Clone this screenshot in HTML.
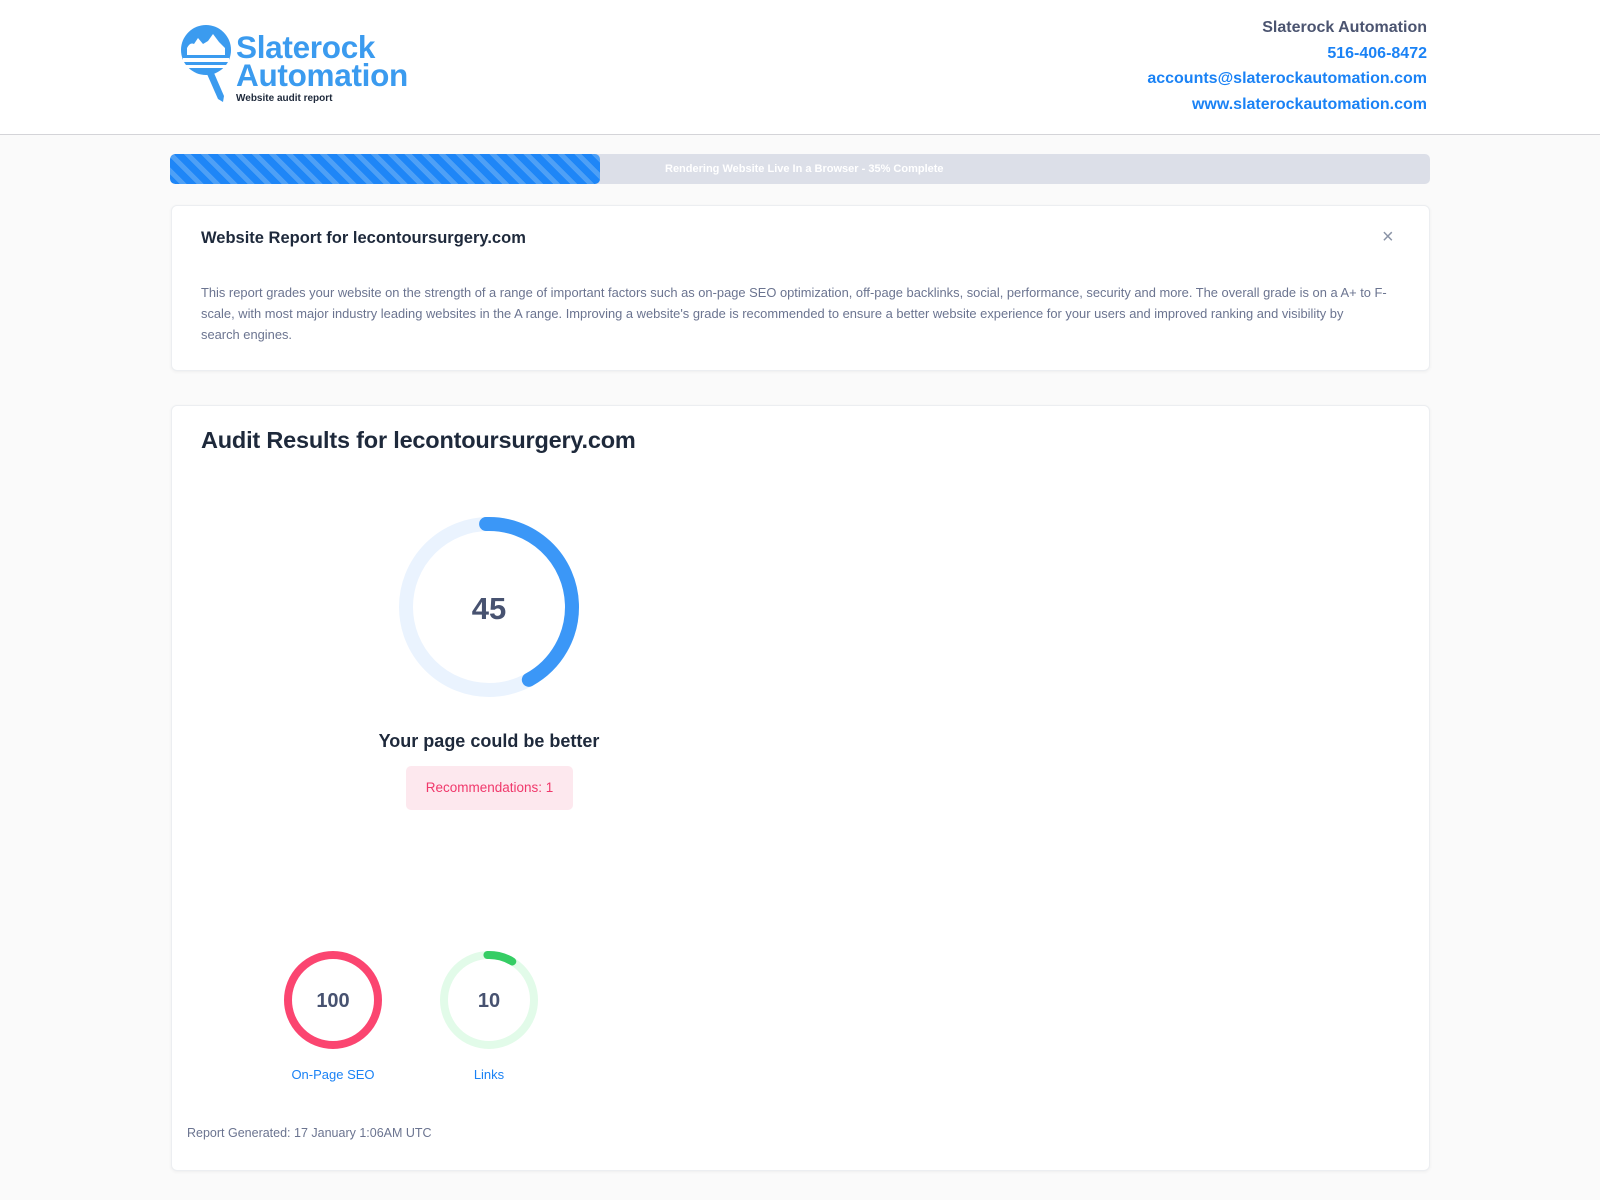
<!DOCTYPE html>
<html><head><meta charset="utf-8"><style>
*{margin:0;padding:0;box-sizing:border-box}
body{width:1600px;height:1200px;background:#fafafa;font-family:"Liberation Sans",sans-serif;position:relative;overflow:hidden}
.hdr{position:absolute;left:0;top:0;width:1600px;height:135px;background:#fff;border-bottom:1px solid #d4d4d8}
.abs{position:absolute}
.r{right:173px;text-align:right;font-size:16px;font-weight:bold;white-space:nowrap}
.card{position:absolute;left:171px;width:1259px;background:#fff;border:1px solid #eceef1;border-radius:6px;box-shadow:0 1px 3px rgba(0,0,0,.05)}
</style></head><body>
<div class="hdr">
<svg class="abs" style="left:178px;top:22px" width="60" height="82" viewBox="0 0 60 82">
<circle cx="28" cy="28" r="25" fill="#3b9bef"/>
<path d="M9 33 L9 26 Q12 20 16 22 L20 16 L25 22 L30 19 L35 12 L41 20 L47 26 L47 33 Z" fill="#fff"/>
<rect x="5" y="36" width="46" height="4" fill="#fff"/>
<rect x="5" y="43" width="46" height="3" fill="#fff"/>
<path d="M29 52 L36 51 L46 74 L45 80 L40 77 Z" fill="#3b9bef"/>
</svg>
<div class="abs" style="left:236px;top:33px;font-size:31.5px;font-weight:bold;color:#3b9bef;line-height:28px;letter-spacing:-.3px">Slaterock<br>Automation</div>
<div class="abs" style="left:236px;top:93px;font-size:10px;font-weight:bold;color:#1e293b">Website audit report</div>
<div class="abs r" style="top:19px;color:#4b5470">Slaterock Automation</div>
<div class="abs r" style="top:45px;color:#1a82f5">516-406-8472</div>
<div class="abs r" style="top:70px;color:#1a82f5">accounts@slaterockautomation.com</div>
<div class="abs r" style="top:96px;color:#1a82f5">www.slaterockautomation.com</div>
</div>
<div class="abs" style="left:170px;top:154px;width:1260px;height:30px;background:#dcdfe8;border-radius:5px;overflow:hidden">
<div style="width:430px;height:30px;border-radius:5px;background:repeating-linear-gradient(45deg,#1e86f7 0 7px,#4ea0f6 7px 12px)"></div>
<div class="abs" style="left:495px;top:9px;font-size:11px;font-weight:bold;color:#fff;white-space:nowrap">Rendering Website Live In a Browser - 35% Complete</div>
</div>
<div class="card" style="top:205px;height:166px">
<div class="abs" style="left:29px;top:23px;font-size:16.5px;font-weight:bold;color:#1e293b">Website Report for lecontoursurgery.com</div>
<div class="abs" style="left:1210px;top:20px;font-size:20px;color:#8a93a6">×</div>
<div class="abs" style="left:29px;top:76px;font-size:12.9px;line-height:21px;color:#6b7490;white-space:nowrap">This report grades your website on the strength of a range of important factors such as on-page SEO optimization, off-page backlinks, social, performance, security and more. The overall grade is on a A+ to F-<br>scale, with most major industry leading websites in the A range. Improving a website's grade is recommended to ensure a better website experience for your users and improved ranking and visibility by<br>search engines.</div>
</div>
<div class="card" style="top:405px;height:766px">
<div class="abs" style="left:29px;top:21px;font-size:23.5px;font-weight:bold;color:#1e293b;letter-spacing:-.2px">Audit Results for lecontoursurgery.com</div>
<svg class="abs" style="left:217px;top:0" width="200" height="300" viewBox="217 0 200 300">
<circle cx="317" cy="201" r="83" fill="none" stroke="#eaf3fe" stroke-width="14"/>
<circle cx="317" cy="201" r="83" fill="none" stroke="#3b97f7" stroke-width="14" stroke-linecap="round" stroke-dasharray="222 1000" transform="rotate(-92 317 201)"/>
<text x="317" y="213" text-anchor="middle" font-family="Liberation Sans" font-weight="bold" font-size="31" fill="#475270">45</text>
</svg>
<div class="abs" style="left:117px;width:400px;top:325px;text-align:center;font-size:18px;font-weight:bold;color:#1e293b">Your page could be better</div>
<div class="abs" style="left:234px;top:360px;width:167px;height:44px;background:#fde8ee;border-radius:5px;color:#f0386b;font-size:13.5px;text-align:center;line-height:44px">Recommendations: 1</div>
<svg class="abs" style="left:0;top:520px" width="420" height="130">
<circle cx="161" cy="74" r="45" fill="none" stroke="#fb4570" stroke-width="8"/>
<text x="161" y="81" text-anchor="middle" font-family="Liberation Sans" font-weight="bold" font-size="20" fill="#475270">100</text>
<circle cx="317" cy="74" r="45" fill="none" stroke="#e2fbe9" stroke-width="8"/>
<circle cx="317" cy="74" r="45" fill="none" stroke="#35cd64" stroke-width="8" stroke-linecap="round" stroke-dasharray="26 1000" transform="rotate(-92 317 74)"/>
<text x="317" y="81" text-anchor="middle" font-family="Liberation Sans" font-weight="bold" font-size="20" fill="#475270">10</text>
</svg>
<div class="abs" style="left:91px;width:140px;top:661px;text-align:center;font-size:13px;color:#1a82f5">On-Page SEO</div>
<div class="abs" style="left:247px;width:140px;top:661px;text-align:center;font-size:13px;color:#1a82f5">Links</div>
<div class="abs" style="left:15px;top:720px;font-size:12.5px;color:#6b7490">Report Generated: 17 January 1:06AM UTC</div>
</div>
</body></html>
